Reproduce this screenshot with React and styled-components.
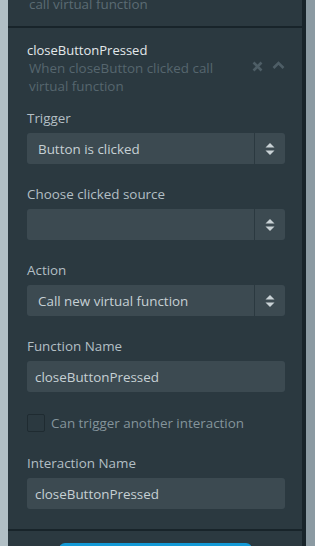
import React from 'react';
import styled, { createGlobalStyle } from 'styled-components';

const GlobalStyle = createGlobalStyle`
  html, body {
    margin: 0;
    padding: 0;
    height: 100%;
    overflow: hidden;
    background: #8b9aa2;
  }
  body {
    font-family: "Open Sans", "Noto Sans", sans-serif;
    font-size: 13.4px;
  }
`;

const Page = styled.div`
  display: grid;
  grid-template-columns: 8px 1fr 9px;
  height: 546px;
`;

const LeftStrip = styled.div`
  background: #b1bfc5;
`;

const RightStrip = styled.div`
  background: #8b9aa2;
`;

const Panel = styled.div`
  background: #2b3940;
  border-right: 4px solid #18242a;
  overflow: hidden;
`;

const Scroller = styled.div`
  margin-top: -5px;
`;

const Section = styled.div`
  padding: ${p => p.$pad || '0 17px 0 19px'};
  border-bottom: 2px solid #18242a;
`;

const PrevDesc = styled.div`
  color: #5b6b73;
  padding-left: 2px;
  line-height: 18px;
  padding-bottom: 13px;
`;

const Header = styled.div`
  display: flex;
  align-items: center;
  padding-top: 13px;
`;

const HeaderText = styled.div`
  flex: 1;
`;

const Title = styled.div`
  color: #e3e8ea;
  font-size: 13px;
  line-height: 18px;
`;

const Desc = styled.div`
  color: #56666e;
  padding-left: 2px;
  line-height: 18px;
  width: 220px;
`;

const Icons = styled.div`
  display: flex;
  gap: 9px;
  margin-bottom: 4px;
  svg { display: block; }
`;

const Field = styled.div`
  margin-top: ${p => p.$top || 21}px;
`;

const Label = styled.div`
  color: #b3bfc4;
  line-height: 18px;
  margin-bottom: 6px;
`;

const SelectBox = styled.div`
  display: flex;
  height: 31px;
  background: #3c4a51;
  border-radius: 3px;
  color: #c6d0d4;
`;

const SelectValue = styled.div`
  flex: 1;
  display: flex;
  align-items: center;
  padding-left: 11px;
  border-right: 1px solid #2b3940;
`;

const SelectArrow = styled.div`
  width: 30px;
  display: flex;
  align-items: center;
  justify-content: center;
`;

const TextInput = styled.div`
  height: 31px;
  display: flex;
  align-items: center;
  background: #3c4a51;
  border-radius: 3px;
  color: #c6d0d4;
  padding-left: 8px;
`;

const CheckRow = styled.label`
  display: flex;
  align-items: center;
  gap: 6px;
  margin-top: 22px;
  color: #84949b;
`;

const Box = styled.span`
  width: 16px;
  height: 16px;
  border: 1px solid #1f2b31;
  border-radius: 2px;
  background: #2b3940;
`;

const Footer = styled.div`
  display: flex;
  justify-content: center;
  padding-top: 12px;
`;

const BlueButton = styled.div`
  width: 193px;
  height: 30px;
  background: #1399d6;
  border-radius: 6px;
`;

const Arrows = () => (
  <svg width="10" height="14" viewBox="0 0 10 14">
    <path d="M5 1 L9.5 5.5 H0.5 Z" fill="#c9d2d6" />
    <path d="M5 13 L9.5 8.5 H0.5 Z" fill="#c9d2d6" />
  </svg>
);

const Select = ({ value }) => (
  <SelectBox>
    <SelectValue>{value}</SelectValue>
    <SelectArrow><Arrows /></SelectArrow>
  </SelectBox>
);

export default function App() {
  return (
    <>
      <GlobalStyle />
      <Page>
        <LeftStrip />
        <Panel>
          <Scroller>
            <Section>
              <PrevDesc>call virtual function</PrevDesc>
            </Section>
            <Section $pad="0 17px 20px 19px">
              <Header>
                <HeaderText>
                  <Title>closeButtonPressed</Title>
                  <Desc>When closeButton clicked call virtual function</Desc>
                </HeaderText>
                <Icons>
                  <svg width="11" height="11" viewBox="0 0 11 11">
                    <path d="M1.5 1.5 L9.5 9.5 M9.5 1.5 L1.5 9.5" stroke="#4e5e66" strokeWidth="2.6" />
                  </svg>
                  <svg width="13" height="9" viewBox="0 0 13 9">
                    <path d="M1.5 7 L6.5 2 L11.5 7" stroke="#4e5e66" strokeWidth="2.6" fill="none" />
                  </svg>
                </Icons>
              </Header>
              <Field $top={14}>
                <Label>Trigger</Label>
                <Select value="Button is clicked" />
              </Field>
              <Field>
                <Label>Choose clicked source</Label>
                <Select value="" />
              </Field>
              <Field>
                <Label>Action</Label>
                <Select value="Call new virtual function" />
              </Field>
              <Field>
                <Label>Function Name</Label>
                <TextInput>closeButtonPressed</TextInput>
              </Field>
              <CheckRow>
                <Box />
                Can trigger another interaction
              </CheckRow>
              <Field $top={22}>
                <Label>Interaction Name</Label>
                <TextInput>closeButtonPressed</TextInput>
              </Field>
            </Section>
            <Footer>
              <BlueButton />
            </Footer>
          </Scroller>
        </Panel>
        <RightStrip />
      </Page>
    </>
  );
}
